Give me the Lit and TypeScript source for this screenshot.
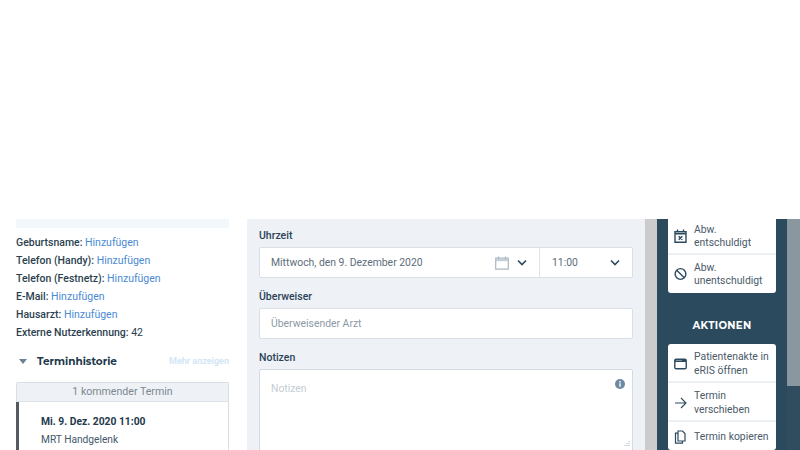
import { LitElement, html, css, svg } from "lit";
import { customElement } from "lit/decorators.js";

const chevron = svg`<path d="M1 1.500l4 4 4-4" fill="none" stroke="#2c4a5e" stroke-width="1.600"/>`;

@customElement("app-root")
export class AppRoot extends LitElement {
  static styles = css`
    :host { display: block; width: 800px; height: 450px; overflow: hidden; background: #fff;
      font-family: Roboto, "Liberation Sans", sans-serif; color: #2b3f50; }
    .page { display: grid; grid-template-columns: 247px 398px 12px 130px 13px; height: 231px; margin-top: 219px; overflow: hidden; }
    .left { padding: 0 18px 0 16px; background: #fff; }
    .banner { height: 9px; background: #f2f7fc; margin-bottom: 6px; }
    .info { font-size: 10.5px; font-weight: 500; line-height: 18px; white-space: nowrap; color: #2b3f50; }
    .info a { color: #4a8ad4; font-weight: 400; }
    .info span { font-weight: 400; }
    .hist { display: flex; align-items: center; margin: 11px 0 13px; height: 16px; }
    .tri { width: 0; height: 0; border-left: 4px solid transparent; border-right: 4px solid transparent; border-top: 5px solid #6b8296; margin: 0 10px 0 3px; }
    .hist b { font-family: Montserrat, Inter, Roboto, sans-serif; font-size: 10.5px; font-weight: 700; color: #22394b; flex: 1; }
    .hist small { font-size: 9px; font-weight: 700; color: #d3e6f6; }
    .card { border: 1px solid #d8dfe5; border-bottom: 0; border-radius: 2px 2px 0 0; }
    .card-h { height: 18px; background: #eef1f5; border-bottom: 1px solid #dde3e8; text-align: center; font-size: 10.6px; line-height: 18px; color: #7c8994; }
    .card-b { border-left: 3px solid #545a60; margin-left: -1px; padding: 12px 0 0 22px; height: 60px; box-sizing: border-box; }
    .card-b b { display: block; font-size: 10.3px; font-weight: 700; line-height: 16px; margin-bottom: 2px; color: #22394b; }
    .card-b div { font-size: 10.2px; line-height: 16px; color: #44586a; }
    .mid { background: #eef1f5; padding: 10px 12px 0 12px; }
    label { display: block; font-size: 10.5px; font-weight: 500; line-height: 14px; color: #2b4257; margin-bottom: 4px; }
    .field { display: flex; align-items: center; height: 31px; box-sizing: border-box; background: #fff; border: 1px solid #d9dfe5; border-radius: 2px;
      font-size: 10.4px; color: #5d6d7b; padding-left: 11px; margin-bottom: 12px; }
    .date { flex: 1; display: flex; align-items: center; height: 100%; border-right: 1px solid #dfe4e9; padding-right: 12px; }
    .date span { flex: 1; }
    .date svg:first-of-type { margin-right: 8px; }
    .time { width: 92px; display: flex; align-items: center; justify-content: space-between; padding: 0 12px 0 12px; box-sizing: border-box; }
    .ph { color: #8c99a5; }
    .area { position: relative; height: 100px; box-sizing: border-box; background: #fff; border: 1px solid #d3dce3; border-radius: 2px; padding: 12px 11px; font-size: 10.4px; color: #c3ccd4; }
    .i { position: absolute; right: 7px; top: 9px; }
    .grip { position: absolute; right: 2px; top: 70px; }
    .sb1 { background: #cccccc; }
    .dark { background: #2c4a5e; padding: 0 11px; }
    .menu { background: #fff; border-radius: 3px; color: #4a5a69; font-size: 10.4px; line-height: 13.5px; overflow: hidden; }
    .menu.first { border-radius: 0 0 3px 3px; }
    .item { display: flex; align-items: center; border-bottom: 2px solid #edf0f3; box-sizing: border-box; }
    .item:last-child { border-bottom: 0; }
    .item svg { flex: none; margin: 0 7px 0 6px; width: 13px; height: 14px; }
    .tall { height: 39px; padding-top: 2px; }
    .low { height: 28px; padding-top: 1px; }
    .h { text-align: center; color: #fff; font-family: Montserrat, Inter, Roboto, sans-serif; font-size: 10.2px; font-weight: 700; letter-spacing: .3px; line-height: 14px; margin: 26px 0 11px; }
    .sb2 { background: linear-gradient(#8b979f 0 167px, #304c5f 167px); }
  `;

  render() {
    return html`<div class="page">
      <div class="left">
        <div class="banner"></div>
        <div class="info">Geburtsname: <a>Hinzufügen</a></div>
        <div class="info">Telefon (Handy): <a>Hinzufügen</a></div>
        <div class="info">Telefon (Festnetz): <a>Hinzufügen</a></div>
        <div class="info">E-Mail: <a>Hinzufügen</a></div>
        <div class="info">Hausarzt: <a>Hinzufügen</a></div>
        <div class="info">Externe Nutzerkennung: <span>42</span></div>
        <div class="hist"><i class="tri"></i><b>Terminhistorie</b><small>Mehr anzeigen</small></div>
        <div class="card">
          <div class="card-h">1 kommender Termin</div>
          <div class="card-b"><b>Mi. 9. Dez. 2020 11:00</b><div>MRT Handgelenk</div></div>
        </div>
      </div>
      <div class="mid">
        <label>Uhrzeit</label>
        <div class="field">
          <div class="date"><span>Mittwoch, den 9. Dezember 2020</span>
            <svg width="14" height="14" viewBox="0 0 14 14"><path d="M.7 2.200h12.600v11H.7z" fill="#fff" stroke="#a9b6c1" stroke-width="1.200"/><path d="M.7 2.200h12.600v3H.7z" fill="#c3ced7"/><path d="M3.500.5v2.500M10.500.5v2.500" stroke="#a9b6c1" stroke-width="1.200"/></svg>
            <svg width="10" height="8" viewBox="0 0 10 8">${chevron}</svg></div>
          <div class="time"><span>11:00</span><svg width="10" height="8" viewBox="0 0 10 8">${chevron}</svg></div>
        </div>
        <label>Überweiser</label>
        <div class="field ph">Überweisender Arzt</div>
        <label>Notizen</label>
        <div class="area">Notizen
          <svg class="i" width="10" height="10" viewBox="0 0 10 10"><circle cx="5" cy="5" r="5" fill="#6d8aa3"/><path d="M4.300 4.300h1.400v3.400H4.300zM4.300 2h1.400v1.400H4.300z" fill="#fff"/></svg>
          <svg class="grip" width="7" height="7" viewBox="0 0 7 7"><path d="M6 1v1M4 3v1M6 3v1M2 5v1M4 5v1M6 5v1" stroke="#a8b2bb" stroke-width="1"/></svg>
        </div>
      </div>
      <div class="sb1"></div>
      <div class="dark">
        <div class="menu first">
          <div class="item" style="height:36px">
            <svg viewBox="0 0 13 14" fill="none" stroke="#2c4a5e" stroke-width="1.400"><path d="M1 2.700h11v10.600H1zM3.500.5v3M9.500.5v3M1 4.800h11M4.700 7.200l3.600 3.600M8.300 7.200l-3.600 3.600"/></svg>
            <div>Abw.<br />entschuldigt</div></div>
          <div class="item" style="height:38px">
            <svg viewBox="0 0 14 14" fill="none" stroke="#2c4a5e" stroke-width="1.500"><circle cx="7" cy="7" r="5.800"/><path d="M2.900 2.900l8.200 8.200"/></svg>
            <div>Abw.<br />unentschuldigt</div></div>
        </div>
        <div class="h">AKTIONEN</div>
        <div class="menu">
          <div class="item tall">
            <svg viewBox="0 0 13 14"><rect x=".8" y="2.300" width="11.400" height="9.400" rx="1.200" fill="none" stroke="#2c4a5e" stroke-width="1.400"/><path d="M1 2.500h11v2.500H1z" fill="#2c4a5e"/><path d="M2.500 3.500h1M4.500 3.500h1M6.500 3.500h1" stroke="#fff" stroke-width=".8"/></svg>
            <div>Patientenakte in<br />eRIS öffnen</div></div>
          <div class="item tall">
            <svg viewBox="0 0 13 14" fill="none" stroke="#2c4a5e" stroke-width="1.100"><path d="M1 7h11M7 2l5 5-5 5"/></svg>
            <div>Termin<br />verschieben</div></div>
          <div class="item low">
            <svg viewBox="0 0 13 14" fill="none" stroke="#2c4a5e" stroke-width="1.200"><path d="M4 3.200H1.500v10h7V11M4 1h4.500L11 3.500V11H4z"/></svg>
            <div>Termin kopieren</div></div>
        </div>
      </div>
      <div class="sb2"></div>
    </div>`;
  }
}
